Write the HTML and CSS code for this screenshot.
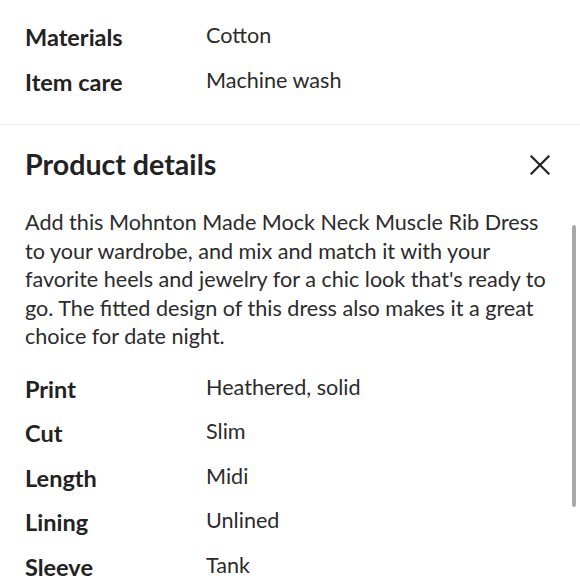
FILE: index.html
```html
<!DOCTYPE html>
<html>
<head>
<meta charset="utf-8">
<link rel="stylesheet" href="styles.css">
</head>
<body>
<div class="page">
  <section class="specs top">
    <div class="row"><div class="label">Materials</div><div class="value">Cotton</div></div>
    <div class="row"><div class="label">Item care</div><div class="value">Machine wash</div></div>
  </section>
  <div class="divider"></div>
  <section class="details">
    <header class="head">
      <h2 class="title">Product details</h2>
      <svg class="close" width="20" height="20" viewBox="0 0 20 20"><path d="M1.5 1.5 L18.5 18.5 M18.5 1.5 L1.5 18.5" stroke="#222" stroke-width="2.2" fill="none" stroke-linecap="square"/></svg>
    </header>
    <p class="desc">Add this Mohnton Made Mock Neck Muscle Rib Dress to your wardrobe, and mix and match it with your favorite heels and jewelry for a chic look that's ready to go. The fitted design of this dress also makes it a great choice for date night.</p>
    <div class="specs">
      <div class="row"><div class="label">Print</div><div class="value">Heathered, solid</div></div>
      <div class="row"><div class="label">Cut</div><div class="value">Slim</div></div>
      <div class="row"><div class="label">Length</div><div class="value">Midi</div></div>
      <div class="row"><div class="label">Lining</div><div class="value">Unlined</div></div>
      <div class="row"><div class="label">Sleeve</div><div class="value">Tank</div></div>
    </div>
  </section>
  <div class="scrollbar"></div>
</div>
</body>
</html>
```
FILE: styles.css
```css
html, body {
  margin: 0;
  padding: 0;
  background: #fff;
}
.page {
  position: relative;
  width: 580px;
  height: 580px;
  overflow: hidden;
  font-family: Lato, "Noto Sans", sans-serif;
  color: #2b2b2b;
}
.specs.top {
  padding: 16px 0 19px 25px;
}
.row {
  display: grid;
  grid-template-columns: 181px 1fr;
  align-items: center;
  height: 44.5px;
}
.label {
  font-size: 23.5px;
  font-weight: 700;
  color: #222;
  line-height: 42.5px;
  padding-bottom: 2px;
}
.value {
  font-size: 21.6px;
  line-height: 38px;
  padding-bottom: 6px;
  color: #2b2b2b;
}
.divider {
  height: 1px;
  background: #ededed;
}
.details {
  padding: 0 28px 0 25px;
}
.head {
  display: flex;
  justify-content: space-between;
  align-items: center;
  height: 30px;
  margin-top: 25px;
  padding-right: 2px;
}
.title {
  margin: 0 0 2px 0;
  font-size: 28.6px;
  font-weight: 700;
  color: #222;
}
.close {
  display: block;
}
.desc {
  margin: 28px 0 17px 0;
  font-size: 21.6px;
  line-height: 28.5px;
  color: #2b2b2b;
}
.scrollbar {
  position: absolute;
  left: 572px;
  top: 225px;
  width: 4px;
  height: 282px;
  border-radius: 2px;
  background: #a9a9a9;
}
```
